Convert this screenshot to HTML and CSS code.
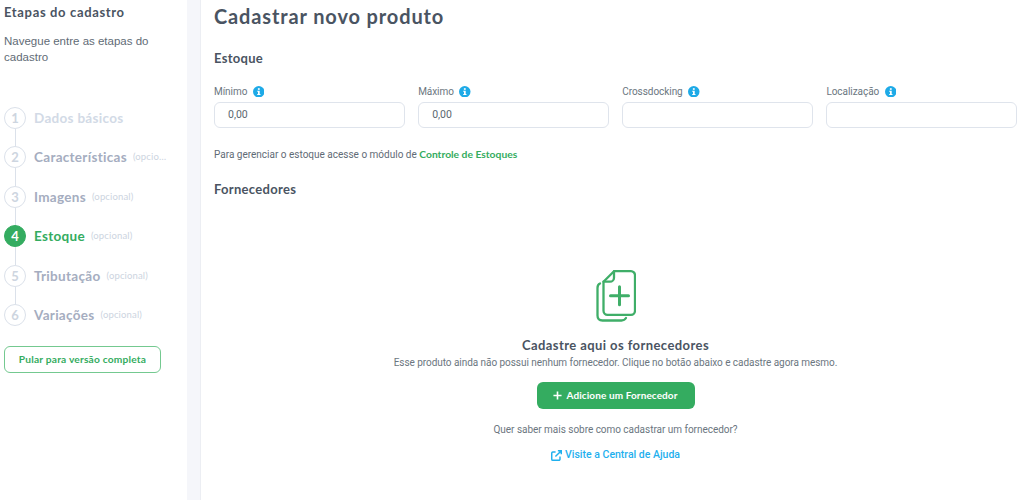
FILE: index.html
```html
<!DOCTYPE html>
<html lang="pt-BR">
<head>
<meta charset="utf-8">
<title>Cadastrar novo produto</title>
<link rel="stylesheet" href="styles.css">
</head>
<body>
<div class="layout">
  <aside class="sidebar">
    <h2 class="side-title">Etapas do cadastro</h2>
    <p class="side-desc">Navegue entre as etapas do cadastro</p>
    <ol class="steps">
      <li class="step step-first"><span class="num">1</span><span class="step-name">Dados básicos</span></li>
      <li class="step"><span class="num">2</span><span class="step-name">Características</span><span class="opt opt-cut">(opcional)</span></li>
      <li class="step"><span class="num">3</span><span class="step-name">Imagens</span><span class="opt">(opcional)</span></li>
      <li class="step step-active"><span class="num">4</span><span class="step-name">Estoque</span><span class="opt">(opcional)</span></li>
      <li class="step"><span class="num">5</span><span class="step-name">Tributação</span><span class="opt">(opcional)</span></li>
      <li class="step step-last"><span class="num">6</span><span class="step-name">Variações</span><span class="opt">(opcional)</span></li>
    </ol>
    <a class="skip" href="#">Pular para versão completa</a>
  </aside>
  <div class="divider"></div>
  <main class="main">
    <h1 class="page-title">Cadastrar novo produto</h1>
    <h2 class="section-title">Estoque</h2>
    <div class="fields">
      <div class="field">
        <label class="field-label">Mínimo <svg class="info" viewBox="0 0 12 12"><circle cx="6" cy="6" r="6"/><rect x="5.1" y="2.3" width="1.9" height="1.7" fill="#fff"/><path d="M4.4 5h2.6v3.4h.8v1H4.4v-1h.8V6h-.8z" fill="#fff"/></svg></label>
        <div class="input">0,00</div>
      </div>
      <div class="field">
        <label class="field-label">Máximo <svg class="info" viewBox="0 0 12 12"><circle cx="6" cy="6" r="6"/><rect x="5.1" y="2.3" width="1.9" height="1.7" fill="#fff"/><path d="M4.4 5h2.6v3.4h.8v1H4.4v-1h.8V6h-.8z" fill="#fff"/></svg></label>
        <div class="input">0,00</div>
      </div>
      <div class="field">
        <label class="field-label">Crossdocking <svg class="info" viewBox="0 0 12 12"><circle cx="6" cy="6" r="6"/><rect x="5.1" y="2.3" width="1.9" height="1.7" fill="#fff"/><path d="M4.4 5h2.6v3.4h.8v1H4.4v-1h.8V6h-.8z" fill="#fff"/></svg></label>
        <div class="input"></div>
      </div>
      <div class="field">
        <label class="field-label">Localização <svg class="info" viewBox="0 0 12 12"><circle cx="6" cy="6" r="6"/><rect x="5.1" y="2.3" width="1.9" height="1.7" fill="#fff"/><path d="M4.4 5h2.6v3.4h.8v1H4.4v-1h.8V6h-.8z" fill="#fff"/></svg></label>
        <div class="input"></div>
      </div>
    </div>
    <p class="note">Para gerenciar o estoque acesse o módulo de <a class="note-link" href="#">Controle de Estoques</a></p>
    <h2 class="section-title section-second">Fornecedores</h2>
    <section class="empty">
      <svg class="empty-icon" viewBox="0 0 40 52" fill="none" stroke="#3fae68" stroke-width="2.3" stroke-linecap="round" stroke-linejoin="round">
        <path d="M18 1.200h17a4 4 0 0 1 4 4v35.600a4 4 0 0 1-4 4H11.500a4 4 0 0 1-4-4V11.700z"/>
        <path d="M18 1.200v6.500a4 4 0 0 1-4 4H7.500"/>
        <path d="M4 13.500Q1.500 14.500 1.500 18v27.500q0 5 5 5h19q3 0 4.500-2.500"/>
        <path d="M23.500 16.700v18M14.500 25.700h18" stroke-width="3"/>
      </svg>
      <h3 class="empty-title">Cadastre aqui os fornecedores</h3>
      <p class="empty-text">Esse produto ainda não possui nenhum fornecedor. Clique no botão abaixo e cadastre agora mesmo.</p>
      <a class="add-btn" href="#"><svg class="add-plus" viewBox="0 0 10 10"><path d="M5 .5v9M.5 5h9" stroke="#fff" stroke-width="1.800"/></svg>Adicione um Fornecedor</a>
      <p class="empty-q">Quer saber mais sobre como cadastrar um fornecedor?</p>
      <a class="help" href="#"><svg class="help-icon" viewBox="0 0 12 12" fill="none" stroke="#1fb0ee" stroke-width="1.600"><path d="M9.800 7v3a1.200 1.200 0 0 1-1.200 1.200H2A1.200 1.200 0 0 1 .8 10V3.400A1.200 1.200 0 0 1 2 2.200h3"/><path d="M4.800 7.200 11 1M7.500.8h3.700v3.700"/></svg>Visite a Central de Ajuda</a>
    </section>
  </main>
</div>
</body>
</html>
```
FILE: styles.css
```css
* { box-sizing: border-box; }
html, body { margin: 0; padding: 0; }
body {
  width: 1024px;
  height: 500px;
  overflow: hidden;
  background: #fff;
  font-family: Roboto, "Liberation Sans", sans-serif;
  color: #5b6670;
}
a { text-decoration: none; }
.layout { display: flex; height: 500px; }

.sidebar { width: 187px; flex: none; padding: 4px 0 0 4px; }
.side-title {
  margin: 0;
  font: 700 13px/16px Lato, sans-serif;
  letter-spacing: .65px;
  color: #4a5462;
}
.side-desc {
  margin: 13px 0 0;
  width: 170px;
  font: 400 11.500px/16px "Liberation Sans", sans-serif;
  color: #5f6b76;
}
.steps { list-style: none; margin: 42px 0 0; padding: 0; }
.step {
  position: relative;
  display: flex;
  align-items: center;
  height: 22px;
  margin-bottom: 17.400px;
  white-space: nowrap;
}
.step::after {
  content: "";
  position: absolute;
  left: 10.500px;
  top: 22px;
  width: 1px;
  height: 18px;
  background: #dbe1ea;
}
.step-last::after { display: none; }
.num {
  flex: none;
  width: 22px;
  height: 22px;
  border: 1px solid #dbe1ea;
  border-radius: 50%;
  text-align: center;
  font: 700 13px/20px Lato, sans-serif;
  color: #cdd5e0;
  background: #fff;
}
.step-name {
  margin-left: 8px;
  font: 700 13.500px/18px Lato, sans-serif;
  letter-spacing: .3px;
  color: #a5adc0;
}
.step-first .step-name { color: #d2dae6; }
.opt {
  margin-left: 6px;
  font: 400 9.500px/18px Lato, sans-serif;
  letter-spacing: .15px;
  color: #ccd4e0;
}
.opt-cut { width: 36px; overflow: hidden; text-overflow: ellipsis; }
.step-active .num { background: #34ac60; border-color: #34ac60; color: #fff; }
.step-active .step-name { color: #34ac60; }
.skip {
  display: block;
  width: 157px;
  height: 27px;
  margin-top: 20px;
  border: 1px solid #74c990;
  border-radius: 6px;
  text-align: center;
  font: 700 10.200px/25px Lato, sans-serif;
  letter-spacing: .2px;
  color: #34ac60;
}

.divider {
  width: 14px;
  flex: none;
  background: #f5f6fa;
  border-right: 1px solid #eceef3;
}
.main { flex: 1; min-width: 0; padding: 4px 7px 0 13px; }
.page-title {
  margin: 0;
  font: 700 20px/24px Lato, sans-serif;
  letter-spacing: .87px;
  color: #4a5462;
}
.section-title {
  margin: 22px 0 0;
  font: 700 13px/16px Lato, sans-serif;
  letter-spacing: .3px;
  color: #4a5462;
}
.section-second { margin-top: 19px; }
.fields {
  display: grid;
  grid-template-columns: repeat(4, 1fr);
  column-gap: 13.500px;
  margin-top: 17px;
}
.field-label {
  display: flex;
  align-items: center;
  gap: 5.500px;
  height: 18px;
  font: 400 10px/18px Roboto, sans-serif;
  letter-spacing: -.05px;
  color: #6b7680;
}
.info { width: 11.500px; height: 11.500px; fill: #1eaae7; margin-top: -1px; }
.input {
  height: 26px;
  margin-top: 1px;
  padding-left: 13px;
  border: 1px solid #dfe4ec;
  border-radius: 6px;
  font: 400 10.500px/24px Roboto, sans-serif;
  color: #5b6670;
}
.note {
  margin: 19px 0 0;
  font: 400 10px/14px Roboto, sans-serif;
  color: #5f6b76;
}
.note-link { font: 700 10.300px/14px Lato, sans-serif; color: #34ac60; }

.empty { display: flex; flex-direction: column; align-items: center; margin-top: 73px; }
.empty-icon { width: 40px; height: 52px; }
.empty-title {
  margin: 15px 0 0;
  font: 700 13px/16px Lato, sans-serif;
  letter-spacing: .42px;
  color: #4a5462;
}
.empty-text {
  margin: 3px 0 0;
  font: 400 10px/14px Roboto, sans-serif;
  letter-spacing: -.05px;
  color: #6b7680;
}
.add-btn {
  display: flex;
  align-items: center;
  justify-content: center;
  width: 158px;
  height: 27px;
  margin-top: 12px;
  border-radius: 6px;
  background: #34ac60;
  font: 700 10px/27px Lato, sans-serif;
  letter-spacing: .1px;
  color: #fff;
}
.add-plus { width: 9px; height: 9px; margin-right: 4px; }
.empty-q {
  margin: 14px 0 0;
  font: 400 10px/14px Roboto, sans-serif;
  letter-spacing: -.03px;
  color: #6b7680;
}
.help {
  display: flex;
  align-items: center;
  margin-top: 11px;
  font: 500 10.500px/14px Roboto, sans-serif;
  color: #1fb0ee;
}
.help-icon { width: 11px; height: 11px; margin-right: 3px; }
```
